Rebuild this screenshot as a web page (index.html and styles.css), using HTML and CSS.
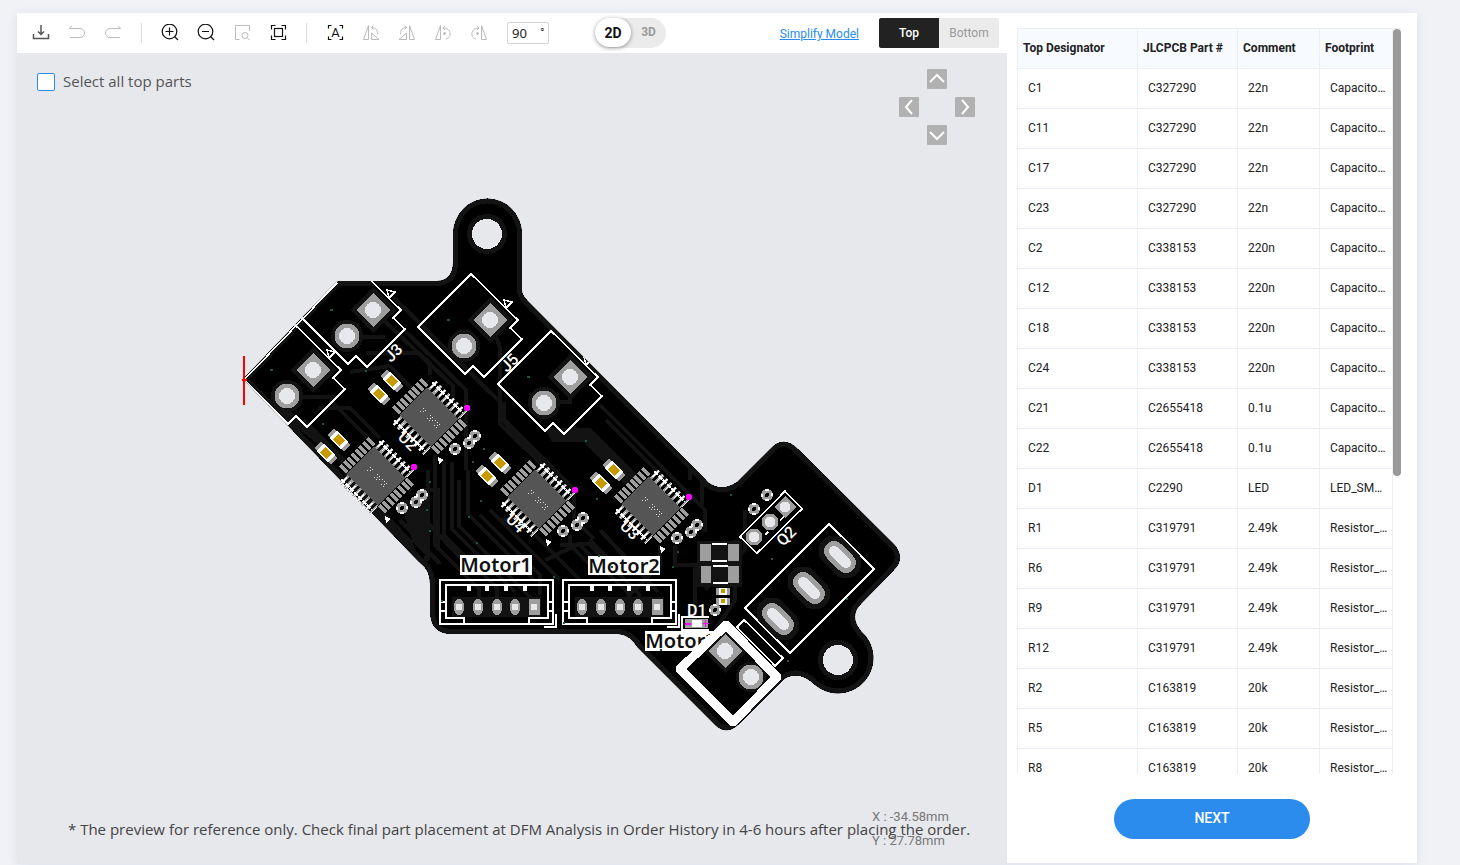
FILE: index.html
```html
<!DOCTYPE html>
<html lang="en">
<head>
<meta charset="utf-8">
<title>Component Placements</title>
<link rel="stylesheet" href="styles.css">
</head>
<body>
<main class="card">
  <section class="viewer">
    <div class="toolbar">
      <button class="tool" aria-label="Download"><svg viewBox="0 0 18 18"><path d="M9 1v9M6 7.500l3 3 3-3M1.500 10v4.500h15V10"/></svg></button>
      <button class="tool off" aria-label="Undo"><svg viewBox="0 0 18 18"><path d="M4 2 1.200 4.500H12a4.500 4.500 0 0 1 0 9H2"/></svg></button>
      <button class="tool off" aria-label="Redo"><svg viewBox="0 0 18 18"><path d="M14 2l2.800 2.500H6a4.500 4.500 0 0 0 0 9h10"/></svg></button>
      <span class="sep"></span>
      <button class="tool" aria-label="Zoom in"><svg viewBox="0 0 18 18" stroke-width="1.200"><circle cx="8.500" cy="7.500" r="7.300"/><path d="M13.500 12.500l3.500 3.500M4.500 7.500h8M8.500 3.500v8"/></svg></button>
      <button class="tool" aria-label="Zoom out"><svg viewBox="0 0 18 18" stroke-width="1.200"><circle cx="8.500" cy="7.500" r="7.300"/><path d="M13.500 12.500l3.500 3.500M5 7.500h7"/></svg></button>
      <button class="tool off" aria-label="Zoom area"><svg viewBox="0 0 18 18"><path d="M6.500 15.500h-4v-14h14V7"/><circle cx="12" cy="11.500" r="3"/><path d="M14.200 13.700l2.500 2.500"/></svg></button>
      <button class="tool" aria-label="Fit to screen"><svg viewBox="0 0 18 18" stroke-width="1.200"><path d="M2.500 5.500v-4h4M12.500 1.500h4v4M16.500 11.500v4h-4M6.500 15.500h-4v-4"/><rect x="5.500" y="4.500" width="8" height="8"/></svg></button>
      <span class="sep"></span>
      <button class="tool" aria-label="Designators"><svg viewBox="0 0 18 18" stroke-width="1.200"><path d="M2.500 4.500v-3h3M13.500 1.500h3v3M16.500 12.500v3h-3M5.500 15.500h-3v-3"/><text class="glyph" x="9.500" y="13">A</text></svg></button>
      <button class="tool off" aria-label="Rotate group left"><svg viewBox="0 0 18 18"><path d="M1.500 15.500h5v-14zM9.500 9v6.500h7.500zM11.500 1.500l-2 2 2 2M9.500 3.500c4 0 6 2 6 6.500"/></svg></button>
      <button class="tool off" aria-label="Rotate group right"><svg viewBox="0 0 18 18"><path d="M16.500 15.500h-5v-14zM8.500 9v6.500H1zM6.500 1.500l2 2-2 2M8.500 3.500c-4 0-6 2-6 6.500"/></svg></button>
      <button class="tool off" aria-label="Rotate left"><svg viewBox="0 0 18 18"><path d="M1.500 15.500h5v-14zM11 2 9 4l2 2M9 4c9 0 9 10 3 11"/><circle cx="10.500" cy="9.500" r="1" fill="#bbb"/></svg></button>
      <button class="tool off" aria-label="Rotate right"><svg viewBox="0 0 18 18"><path d="M16.500 15.500h-5v-14zM7 2l2 2-2 2M9 4c-9 0-9 10-3 11"/><circle cx="7.500" cy="9.500" r="1" fill="#bbb"/></svg></button>
      <label class="angle"><input type="text" value="90" aria-label="Rotation angle"><span>°</span></label>
      <div class="dims"><button class="dim on">2D</button><button class="dim">3D</button></div>
      <a class="simplify" href="#">Simplify Model</a>
      <div class="sides"><button class="side on">Top</button><button class="side">Bottom</button></div>
    </div>

    <div class="stage">
      <svg class="board" viewBox="17 53 990 811" preserveAspectRatio="xMidYMid slice" shape-rendering="crispEdges" fill="none" role="img" aria-label="Board preview">
        <defs>
          <path id="edge" d="M243 379 335 283Q337 281 340 281H437Q453 280 453 262V234A34 35 0 0 1 522 234V290Q522 295 527 300L709 483Q722 492 737 482L769 450Q783 434 798 449L894 544Q906 558 894 570L861 604Q849 616 861 631A35 35 0 1 1 815 685Q798 669 783 680L738 725Q727 735 716 726L638 648Q629 634 618 634H452Q430 634 430 611V584Q430 570 420 563Z"/>
          <clipPath id="cut"><use href="#edge"/></clipPath>
          <g id="terminal">
            <path class="band" d="M0-23 23 0 0 23-23 0zM-10 26a16 16 0 1 1-32 0 16 16 0 1 1 32 0"/>
            <path class="pad" d="M0-17 17 0 0 17-17 0z"/><circle class="hole" r="8"/>
            <circle class="pad" cx="-26" cy="26" r="12.500"/><circle class="hole" cx="-26" cy="26" r="8"/>
          </g>
          <g id="jack">
            <use href="#terminal"/>
            <path class="silk" d="M-19-46 28 0 20 8 32 19-6 57-17 46-25 54-72 7zM14-20l2 8 6-6z"/>
            <path class="via" d="M-43-1h3v2h-3z"/>
          </g>
          <g id="cap">
            <path class="pad" d="M-12-4.500h24v9h-24z"/><path class="ink" d="M-8-5H8V5H-8z"/><path fill="#c99a00" d="M-4.500-4h9v8h-9z"/>
          </g>
          <g id="dot">
            <circle r="4" stroke="#9e9e9e" stroke-width="4"/><path stroke="#fff" stroke-width="2" d="M-2-5h4M-2 5h4M-5-1v3M5-2v3"/>
          </g>
          <g id="chip">
            <g transform="rotate(45)">
              <path stroke="#9e9e9e" stroke-width="10" stroke-dasharray="3.500 1.900" d="M-28-22v43M28-21v43"/>
              <path stroke="#9e9e9e" stroke-width="11" stroke-dasharray="3 3" d="M-21-25h43M-21 25h43"/>
              <path stroke="#fff" stroke-width="9" stroke-dasharray="1 5" d="M-20-26h43M-20 26h43"/>
              <path stroke="#fff" stroke-width="2" stroke-dasharray="5 1" d="M-22-27h43M-22 27h43"/>
              <path fill="#555" d="M-22-19.500h44v39h-44z"/>
              <path stroke="#ddd" stroke-dasharray="1 2 2 1 1 3" d="M-14-2h27M-12 0h26M-14 2h28"/>
            </g>
            <circle cx="38" cy="-9" r="3" fill="#f0f"/>
            <path class="ink" d="M9 40l6 3-5 4z"/>
            <use href="#dot" x="26" y="32"/><use href="#dot" x="40" y="26"/><use href="#dot" x="46" y="19"/>
            <use href="#cap" transform="translate(-37 -36) rotate(45)"/>
            <use href="#cap" transform="translate(-50 -23) rotate(45)"/>
          </g>
          <g id="motor">
            <path stroke="#131313" stroke-width="20" d="M452 607h89"/>
            <path class="silk wide" d="M440 580h113v44H440zM464 623v-5h-18v-33h102v33h-19v5M440 602h6M440 611h6M548 602h5M548 611h5M556 614v13h-12"/>
            <path stroke="#fff" stroke-width="4" d="M469 585v6M487 585v6M506 585v6M525 585v6"/>
            <g class="pad"><ellipse cx="459" cy="607" rx="5.500" ry="8"/><ellipse cx="478" cy="607" rx="5.500" ry="8"/><ellipse cx="497" cy="607" rx="5.500" ry="8"/><ellipse cx="515" cy="607" rx="5.500" ry="8"/><path d="M529 599h11v16h-11z"/></g>
            <g class="hole"><circle cx="459" cy="607" r="3.500"/><circle cx="478" cy="607" r="3.500"/><circle cx="497" cy="607" r="3.500"/><circle cx="515" cy="607" r="3.500"/><circle cx="534" cy="607" r="3.500"/></g>
          </g>
          <g id="slot" stroke-linecap="round">
            <path stroke="#131313" stroke-width="31" d="M-6-6 6 6"/><path stroke="#9e9e9e" stroke-width="20" d="M-6-6 6 6"/><path stroke="#e7e8ec" stroke-width="10" d="M-6-6 6 6"/>
          </g>
          <g id="res"><path class="pad" d="M-7-3.500H7v7H-7z"/><path class="ink" d="M-4-3.500h8v7h-8z"/><path fill="#c99a00" d="M-2-2h4v4h-4z"/></g>
        </defs>

        <use href="#edge" fill="#000"/>
        <g clip-path="url(#cut)">
          <g class="trace">
            <path d="M346 337h39M373 310l80 76v14M393 297l107 105v22l60 58M404 330l62 60v80M490 320l10 28v70l48 48M570 377v25h-32M504 402v17l70 70v30l20 20"/>
            <path d="M287 397h50M318 408h32l30 30M304 420l42 42M330 400l50 50M350 372l40-6 35 36M430 375v-12l-12-10h-52"/>
            <path d="M435 455v90l44 44v18M444 460v75l53 53v18M452 462v67l63 63M459 480v46l75 75M468 470v44l66 66M428 470v40l-14 14M422 490h16v60M410 505l60 62M400 520l40 44"/>
            <path d="M480 515l60 60v20M490 510l70 70M500 520h20l60 60M545 560l34-16h10l50 50v10M560 545h20l50 50M590 540l30 30M570 535v10l30 30M600 530l58 62M660 545v20l-40 40"/>
            <path d="M586 440l60 62M572 425l70 72M606 420l60 60v20M600 405l105 105v22M690 480v-15h12v40M675 545v20h20v60M745 510v40l-40 40M735 540v60l-20 30"/>
          </g>
          <path class="band" d="M245 385 300 430 340 462 352 500 420 570 425 555 365 490 334 450 296 415zM545 428h45l58 58-14 8-50-52h-32zM400 500l30 0 0 60-10 6z"/>
          <use href="#edge" stroke="#131313" stroke-width="10"/>
          <use href="#jack" x="373" y="310"/>
          <use href="#jack" x="313" y="370"/>
          <use href="#jack" x="490" y="320"/>
          <use href="#jack" x="570" y="377"/>
        </g>
        <path class="silk" d="M245 379l92-96"/>

        <circle class="band" cx="487" cy="234" r="20"/><circle class="hole" cx="487" cy="234" r="15"/>
        <circle class="band" cx="838" cy="660" r="20"/><circle class="hole" cx="838" cy="660" r="15"/>

        <use href="#chip" x="429" y="417"/>
        <use href="#chip" x="376" y="476"/>
        <use href="#chip" x="537" y="499"/>
        <use href="#chip" x="651" y="506"/>

        <use href="#motor"/>
        <use href="#motor" x="123"/>

        <path class="silk" d="M785 491l17 18-45 44-17-16zM829 524l45 45-84 84-45-45z"/>
        <path class="pad" d="M785 496l11 11-11 11-11-11z"/>
        <circle class="pad" cx="770" cy="522" r="8.500"/><circle class="pad" cx="754" cy="537" r="8.500"/>
        <circle class="hole" cx="785" cy="507" r="5.500"/><circle class="hole" cx="770" cy="522" r="5.500"/><circle class="hole" cx="754" cy="537" r="5.500"/>
        <path class="silk" d="M780 520l4-3M765 535l3-3"/>
        <use href="#slot" x="840" y="557"/><use href="#slot" x="809" y="588"/><use href="#slot" x="778" y="619"/>
        <use href="#dot" x="767" y="495"/><use href="#dot" x="754" y="509"/><use href="#dot" x="715" y="610"/>

        <path class="band" d="M697 541h45v46h-45z"/>
        <path class="pad" d="M700 544h11v17h-11zM728 544h11v17h-11zM701 566h10v17h-10zM728 566h11v17h-11z"/>
        <path class="silk wide" d="M712 544h15M712 561h15M713 566h15M713 583h15"/>
        <use href="#res" x="723" y="591"/><use href="#res" x="723" y="601"/>

        <path class="silk" d="M709 617h-27v13h27"/>
        <path class="pad" d="M685 619h23v9h-23z"/><path class="ink" d="M692 620h10v7h-10z"/>
        <path stroke="#f0f" stroke-width="2" d="M685 624h6"/><path stroke="#f0f" d="M702.500 623.500h6M705.500 620v7"/>

        <g class="tag"><path d="M460 555h72v20h-72z"/><path d="M588 556h72v19h-72z"/><path d="M645 631h72v20h-72z"/></g>
        <g class="name"><text x="496" y="572">Motor1</text><text x="624" y="573">Motor2</text><text x="681" y="648">Motor3</text></g>
        <g class="ref">
          <text transform="translate(397 438) rotate(45)">U2</text>
          <text transform="translate(505 520) rotate(45)">U4</text>
          <text transform="translate(619 527) rotate(45)">U3</text>
          <text transform="translate(391 363) rotate(-45)">J3</text>
          <text transform="translate(507 373) rotate(-45)">J5</text>
          <text transform="translate(783 547) rotate(-45)">Q2</text>
          <text x="687" y="616">D1</text>
        </g>

        <path fill="#000" d="M726 631 771 677 733 718 685 669z"/>
        <path class="silk" d="M744 620l39 38-8 8-38-39z"/>
        <path class="band" d="M725 629l22 22-22 22-22-22z"/>
        <path class="pad" d="M725 634l17 17-17 17-17-17z"/><circle class="hole" cx="725" cy="651" r="8"/>
        <circle class="band" cx="751" cy="677" r="15"/><circle class="pad" cx="751" cy="677" r="12.500"/><circle class="hole" cx="751" cy="677" r="8"/>
        <path stroke="#fff" stroke-width="9" stroke-linejoin="round" d="M726 625 777 677 733 722 680 669z"/>

        <path class="via" d="M365 370h2v2h-2zM322 423h2v2h-2zM429 481h2v2h-2zM426 509h2v2h-2zM429 530h2v2h-2zM483 448h2v2h-2zM472 461h2v2h-2zM480 500h2v2h-2zM468 516h2v2h-2zM476 542h2v2h-2zM585 440h2v2h-2zM596 498h2v2h-2zM598 555h2v2h-2zM677 551h2v2h-2zM672 566h2v2h-2zM730 494h2v2h-2zM771 558h2v2h-2zM846 598h2v2h-2zM787 660h2v2h-2zM553 576h2v2h-2zM441 600h2v2h-2zM563 622h2v2h-2zM660 649h2v2h-2zM611 566h2v2h-2z"/>
        <path stroke="#f00" stroke-width="2" d="M244 356v49M242 380h5"/>
      </svg>

      <label class="pick"><input type="checkbox"><span>Select all top parts</span></label>

      <div class="pan">
        <button class="up" aria-label="Pan up"><svg viewBox="0 0 20 20"><path d="M3 13l7-7 7 7"/></svg></button>
        <button class="left" aria-label="Pan left"><svg viewBox="0 0 20 20"><path d="M13 3l-6 7 6 7"/></svg></button>
        <button class="right" aria-label="Pan right"><svg viewBox="0 0 20 20"><path d="M7 3l6 7-6 7"/></svg></button>
        <button class="down" aria-label="Pan down"><svg viewBox="0 0 20 20"><path d="M3 7l7 7 7-7"/></svg></button>
      </div>

      <p class="note">* The preview for reference only. Check final part placement at DFM Analysis in Order History in 4-6 hours after placing the order.</p>
      <div class="coords"><div>X : -34.58mm</div><div>Y : 27.78mm</div></div>
    </div>
  </section>

  <aside class="parts">
    <div class="scroller">
      <table>
        <colgroup><col class="c1"><col class="c2"><col class="c3"><col></colgroup>
        <thead><tr><th>Top Designator</th><th>JLCPCB Part #</th><th>Comment</th><th>Footprint</th></tr></thead>
        <tbody>
          <tr><td>C1</td><td>C327290</td><td>22n</td><td>Capacito…</td></tr>
          <tr><td>C11</td><td>C327290</td><td>22n</td><td>Capacito…</td></tr>
          <tr><td>C17</td><td>C327290</td><td>22n</td><td>Capacito…</td></tr>
          <tr><td>C23</td><td>C327290</td><td>22n</td><td>Capacito…</td></tr>
          <tr><td>C2</td><td>C338153</td><td>220n</td><td>Capacito…</td></tr>
          <tr><td>C12</td><td>C338153</td><td>220n</td><td>Capacito…</td></tr>
          <tr><td>C18</td><td>C338153</td><td>220n</td><td>Capacito…</td></tr>
          <tr><td>C24</td><td>C338153</td><td>220n</td><td>Capacito…</td></tr>
          <tr><td>C21</td><td>C2655418</td><td>0.1u</td><td>Capacito…</td></tr>
          <tr><td>C22</td><td>C2655418</td><td>0.1u</td><td>Capacito…</td></tr>
          <tr><td>D1</td><td>C2290</td><td>LED</td><td>LED_SM…</td></tr>
          <tr><td>R1</td><td>C319791</td><td>2.49k</td><td>Resistor_…</td></tr>
          <tr><td>R6</td><td>C319791</td><td>2.49k</td><td>Resistor_…</td></tr>
          <tr><td>R9</td><td>C319791</td><td>2.49k</td><td>Resistor_…</td></tr>
          <tr><td>R12</td><td>C319791</td><td>2.49k</td><td>Resistor_…</td></tr>
          <tr><td>R2</td><td>C163819</td><td>20k</td><td>Resistor_…</td></tr>
          <tr><td>R5</td><td>C163819</td><td>20k</td><td>Resistor_…</td></tr>
          <tr><td>R8</td><td>C163819</td><td>20k</td><td>Resistor_…</td></tr>
        </tbody>
      </table>
      <div class="track"><div class="thumb"></div></div>
    </div>
    <button class="next">NEXT</button>
  </aside>
</main>
</body>
</html>
```

FILE: styles.css
```css
* { box-sizing: border-box; }
body {
  margin: 0;
  padding: 13px 43px 0 17px;
  height: 100vh;
  overflow: hidden;
  background: #f0f2f6;
  color: #222;
  font-family: Roboto, "Liberation Sans", sans-serif;
  font-size: 12px;
}
button { border: 0; padding: 0; background: none; font: inherit; cursor: pointer; }

.card {
  display: grid;
  grid-template-columns: 1fr 410px;
  height: calc(100vh - 15px);
  background: #fff;
  box-shadow: 0 2px 10px rgba(60, 70, 120, 0.1);
}
.viewer { display: flex; flex-direction: column; min-width: 0; }

.toolbar {
  display: flex;
  align-items: center;
  gap: 18px;
  height: 40px;
  padding: 0 8px 0 15px;
}
.tool { width: 18px; height: 18px; flex: none; }
.tool svg { display: block; width: 18px; height: 18px; fill: none; stroke: #111; }
.tool:first-child svg { stroke: #555; stroke-width: 1.5px; }
.tool.off svg { stroke: #bbb; }
.glyph { font: 13px Roboto, sans-serif; text-anchor: middle; fill: #111; stroke: none; }
.sep { width: 1px; height: 20px; margin: 0 1px; background: #ddd; }

.angle {
  display: flex;
  width: 42px;
  height: 22px;
  margin-left: 1px;
  padding: 0 4px;
  border: 1px solid #d4d4d4;
  border-radius: 2px;
  color: #333;
}
.angle input {
  width: 28px;
  padding: 0;
  border: 0;
  outline: 0;
  background: none;
  color: #222;
  font: 13px "Noto Sans", sans-serif;
}
.angle span { padding-top: 3px; }

.dims {
  display: flex;
  margin-left: 28px;
  height: 30px;
  border-radius: 15px;
  background: #ebebeb;
}
.dim { width: 35px; height: 28px; color: #999; font-weight: 700; }
.dim.on {
  width: 36px;
  height: 29px;
  border-radius: 15px;
  background: #fff;
  color: #111;
  font-size: 14px;
  box-shadow: 0 1px 4px rgba(0, 0, 0, 0.4);
}
.simplify { margin-left: auto; padding-top: 2px; color: #2b8ced; }
.sides { display: flex; margin-left: 2px; border-radius: 2px; overflow: hidden; }
.side { width: 60px; height: 30px; background: #ebebeb; color: #999; }
.side.on { background: #222; color: #fff; font-weight: 500; }

.stage { position: relative; flex: 1; min-height: 0; background: #e7e8ec; }
.board { display: block; width: 100%; height: 100%; }
.pad { fill: #9e9e9e; }
.hole { fill: #e7e8ec; }
.band { fill: #131313; }
.ink, .tag { fill: #fff; }
.via { fill: #1d5c33; }
.silk { stroke: #fff; stroke-width: 1.5px; }
.wide { stroke-width: 2px; }
.trace { stroke: #131313; stroke-width: 4px; }
.name { fill: #111; font: 600 20px "Noto Sans", sans-serif; text-anchor: middle; }
.ref { fill: #fff; font: 500 16px Roboto, sans-serif; }

.pick {
  position: absolute;
  top: 20px;
  left: 20px;
  display: flex;
  align-items: center;
  gap: 8px;
  height: 18px;
  color: #555;
  font: 15px/18px "Open Sans", sans-serif;
}
.pick span { padding-bottom: 2px; }
.pick input {
  appearance: none;
  width: 18px;
  height: 18px;
  margin: 0;
  border: 1px solid #2b8ced;
  border-radius: 2px;
  background: #fff;
}

.pan {
  position: absolute;
  top: 16px;
  right: 32px;
  display: grid;
  grid-template: repeat(3, 20px) / repeat(3, 20px);
  gap: 8px;
}
.pan button { background: #b1b1b1; border-radius: 1px; }
.pan svg { display: block; fill: none; stroke: #fff; stroke-width: 2px; }
.up { grid-area: 1 / 2; }
.left { grid-area: 2 / 1; }
.right { grid-area: 2 / 3; }
.down { grid-area: 3 / 2; }

.note {
  position: absolute;
  bottom: 25px;
  left: 51px;
  margin: 0;
  color: #444;
  font: 15px/20px "Open Sans", sans-serif;
  white-space: nowrap;
}
.coords {
  position: absolute;
  right: 61px;
  bottom: 11px;
  width: 74px;
  color: #777;
  font-size: 13px;
  line-height: 24px;
  white-space: nowrap;
}

.parts {
  display: flex;
  flex-direction: column;
  align-items: center;
  min-height: 0;
  padding: 15px 16px 25px 10px;
}
.scroller {
  display: grid;
  grid-template-columns: 1fr 8px;
  grid-template-rows: minmax(0, 1fr);
  flex: 1;
  min-height: 0;
  width: 100%;
  overflow: hidden;
  border-top: 1px solid #ebeef5;
}
table {
  width: 100%;
  height: max-content;
  border-collapse: separate;
  border-spacing: 0;
  table-layout: fixed;
  border-left: 1px solid #ebeef5;
}
.c1 { width: 120px; }
.c2 { width: 100px; }
.c3 { width: 82px; }
th, td {
  height: 40px;
  padding: 0 0 2px 10px;
  border-right: 1px solid #ebeef5;
  border-bottom: 1px solid #ebeef5;
  text-align: left;
  white-space: nowrap;
  overflow: hidden;
}
th { padding-left: 5px; background: #f7faff; font-weight: 700; }
.track { height: 100%; }
.thumb { height: 60%; border-radius: 4px; background: #999; }
.next {
  width: 196px;
  height: 40px;
  margin: 25px 0 0 0;
  padding-bottom: 2px;
  border-radius: 20px;
  background: #2b8ced;
  color: #fff;
  font-size: 14px;
  font-weight: 500;
  transform: none;
}
.parts .next { margin-left: 6px; }
```
